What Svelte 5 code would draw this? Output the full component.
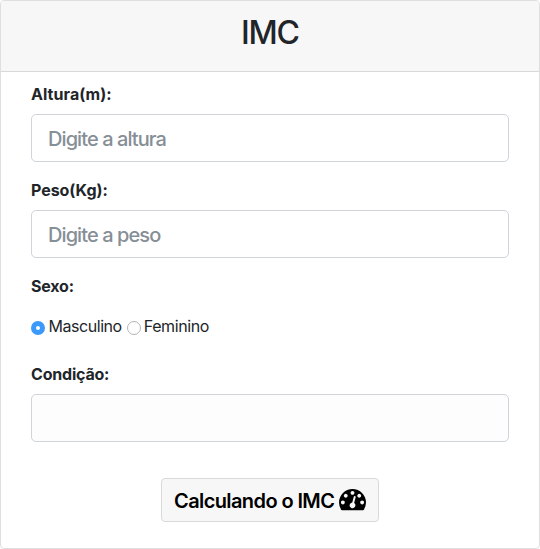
<script>
  let height = $state('');
  let weight = $state('');
  let sex = $state('M');
  let condition = $state('');

  function calculate(event) {
    event.preventDefault();
    const h = parseFloat(height.replace(',', '.'));
    const w = parseFloat(weight.replace(',', '.'));
    if (!h || !w) return;
    const imc = w / (h * h);
    const [low, high] = sex === 'M' ? [20.7, 26.4] : [19.1, 25.8];
    condition = imc < low ? 'Abaixo do peso' : imc <= high ? 'Peso normal' : 'Acima do peso';
  }
</script>

<div class="card">
  <header><h2>IMC</h2></header>
  <form onsubmit={calculate}>
    <div class="group">
      <label for="height"><span class="altura">Altura(m):</span></label>
      <input class="control" id="height" type="text" placeholder="Digite a altura" bind:value={height} />
    </div>
    <div class="group">
      <label for="weight"><span class="peso">Peso(Kg):</span></label>
      <input class="control" id="weight" type="text" placeholder="Digite a peso" bind:value={weight} />
    </div>
    <div class="group sex">
      <div class="title"><span class="sexo">Sexo:</span></div>
      <div class="options">
        <label class="option masc"><input type="radio" name="sex" value="M" bind:group={sex} /><span>Masculino</span></label>
        <label class="option fem"><input type="radio" name="sex" value="F" bind:group={sex} /><span>Feminino</span></label>
      </div>
    </div>
    <div class="group">
      <label for="condition"><span class="cond">Condição:</span></label>
      <input class="control result" id="condition" type="text" readonly value={condition} />
    </div>
    <button type="submit">
      <span>Calculando o IMC</span>
      <svg viewBox="0 256 1792 1408" aria-hidden="true">
        <path d="M384 1152q0-53-37.5-90.5t-90.5-37.5-90.5 37.5-37.5 90.5 37.5 90.5 90.5 37.5 90.5-37.5 37.5-90.5zm192-448q0-53-37.5-90.5t-90.5-37.5-90.5 37.5-37.5 90.5 37.5 90.5 90.5 37.5 90.5-37.5 37.5-90.5zm428 481l101-382q6-26-7.5-48.5t-38.5-29.5-48 6.5-30 39.5l-101 382q-60 5-107 43.5t-63 98.5q-20 77 20 146t117 89 146-20 89-117q16-60-6-117t-72-91zm660-33q0-53-37.5-90.5t-90.5-37.5-90.5 37.5-37.5 90.5 37.5 90.5 90.5 37.5 90.5-37.5 37.5-90.5zm-640-640q0-53-37.5-90.5t-90.5-37.5-90.5 37.5-37.5 90.5 37.5 90.5 90.5 37.5 90.5-37.5 37.5-90.5zm448 192q0-53-37.5-90.5t-90.5-37.5-90.5 37.5-37.5 90.5 37.5 90.5 90.5 37.5 90.5-37.5 37.5-90.5zm320 448q0 261-141 483-19 29-54 29h-1402q-35 0-54-29-141-221-141-483 0-182 71-348t191-286 286-191 348-71 348 71 286 191 191 286 71 348z" />
      </svg>
    </button>
  </form>
</div>

<style>
  :global(body) {
    background: #fff;
  }
  .card {
    box-sizing: border-box;
    height: 549px;
    border: 1px solid #dfdfdf;
    border-radius: 4px;
    overflow: hidden;
    background: #fff;
    color: #212529;
    font: 16px/24px Inter, 'Liberation Sans', sans-serif;
  }
  header {
    box-sizing: border-box;
    height: 71px;
    padding-top: 13px;
    background: #f7f7f7;
    border-bottom: 1px solid #d9d9d9;
    text-align: center;
  }
  h2 {
    margin: 0;
    font-size: 32px;
    font-weight: 500;
    line-height: 38px;
    letter-spacing: -1.2px;
  }
  form {
    display: flex;
    flex-direction: column;
    padding: 10px 30px 0;
  }
  .group {
    display: flex;
    flex-direction: column;
    gap: 8px;
    margin-bottom: 16px;
    font-weight: 700;
  }
  .group.sex {
    gap: 16px;
    margin-bottom: 24px;
  }
  .altura {
    letter-spacing: 0.05px;
  }
  .peso {
    letter-spacing: -0.05px;
  }
  .sexo {
    letter-spacing: -0.2px;
  }
  .cond {
    letter-spacing: -0.2px;
  }
  .control {
    box-sizing: border-box;
    width: 100%;
    height: 48px;
    padding: 2px 16px 0;
    border: 1px solid #ced4da;
    border-radius: 5px;
    background: #fff;
    color: #495057;
    font: 450 20px/30px Inter, 'Liberation Sans', sans-serif;
    letter-spacing: -0.92px;
    outline: none;
  }
  .control::placeholder {
    color: #868e96;
    opacity: 1;
  }
  .result {
    background: #fdfdfd;
  }
  .options {
    display: flex;
    gap: 5px;
    font-weight: 400;
  }
  .option {
    display: flex;
    align-items: center;
    gap: 3.5px;
    letter-spacing: -0.45px;
  }
  .option.fem {
    gap: 3px;
    letter-spacing: -0.4px;
  }
  .option input {
    appearance: none;
    box-sizing: border-box;
    width: 14px;
    height: 14px;
    margin: 4px 0 0;
    border: 1px solid #b4b4b4;
    border-radius: 50%;
    background: #fff;
  }
  .option input:checked {
    border: 5px solid #3b99fc;
  }
  button {
    box-sizing: border-box;
    display: flex;
    align-items: center;
    align-self: center;
    gap: 5px;
    width: 218px;
    height: 44px;
    margin-top: 20px;
    padding: 0 0 0 12px;
    border: 1px solid #d9d9d9;
    border-radius: 4px;
    background: #f7f7f7;
    color: #000;
    font: 600 20px/30px Inter, 'Liberation Sans', sans-serif;
    letter-spacing: -0.6px;
    white-space: nowrap;
  }
  button span {
    padding-top: 2px;
  }
  svg {
    width: 27px;
    height: 21.2px;
    flex: none;
    fill: currentColor;
  }
</style>
